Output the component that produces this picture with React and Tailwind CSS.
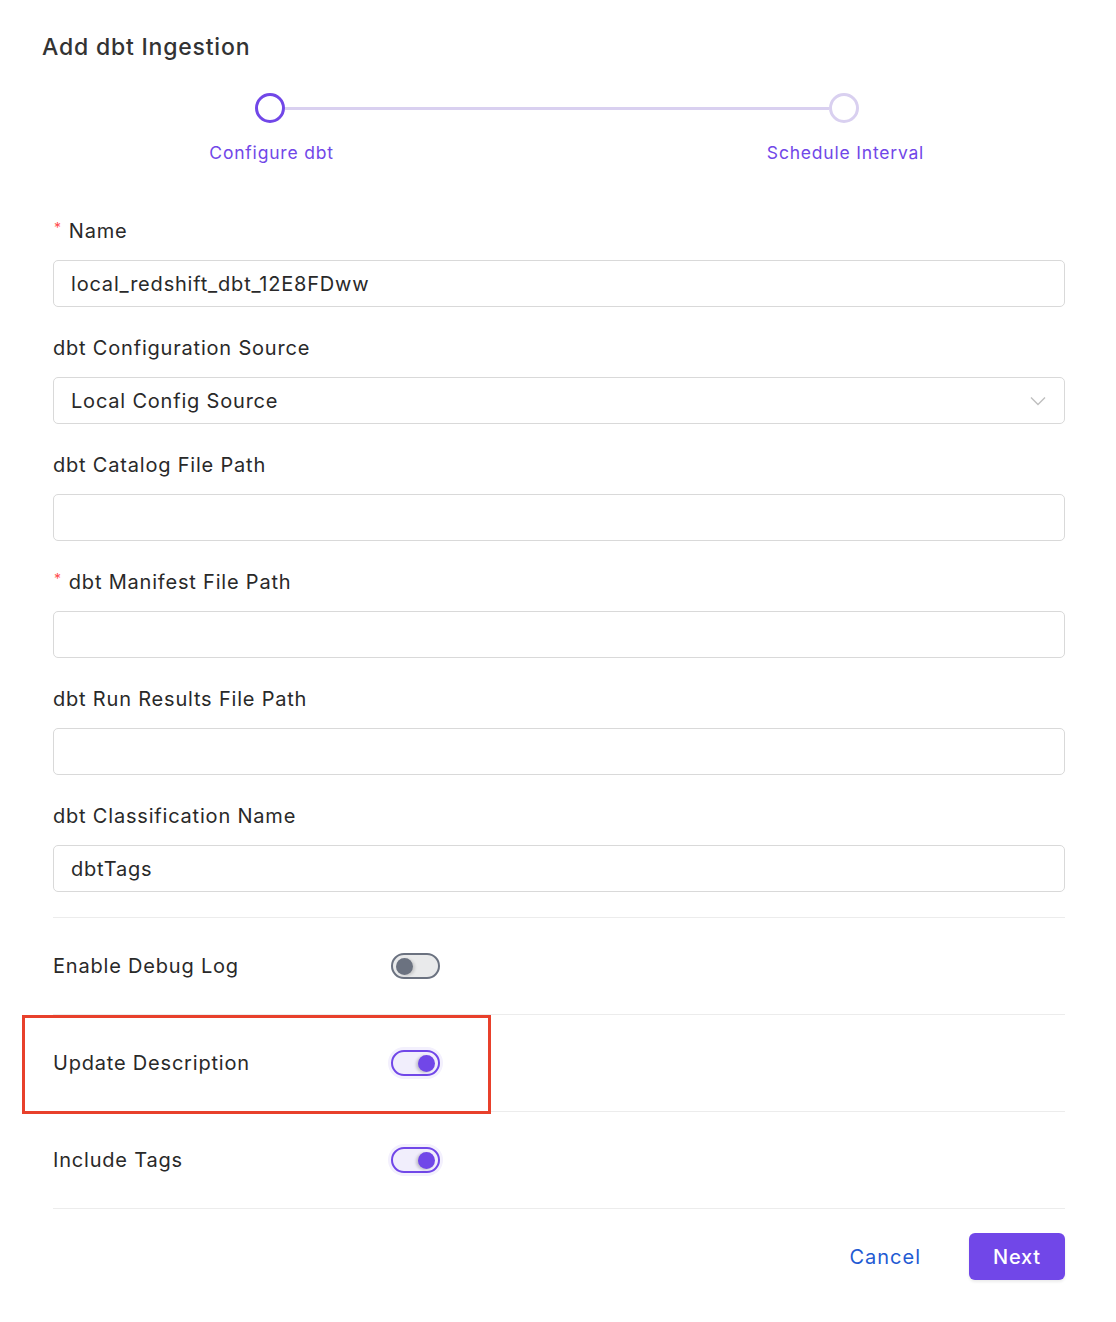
import React, { useState } from 'react';

const fields = [
  { label: 'Name', required: true, value: 'local_redshift_dbt_12E8FDww' },
  { label: 'dbt Configuration Source', select: true, value: 'Local Config Source' },
  { label: 'dbt Catalog File Path', value: '' },
  { label: 'dbt Manifest File Path', required: true, value: '' },
  { label: 'dbt Run Results File Path', value: '' },
  { label: 'dbt Classification Name', value: 'dbtTags' },
];

const Toggle = ({ on, onClick }) => (
  <button
    onClick={onClick}
    className={`relative w-[49px] h-[26px] rounded-full border-2 flex items-center px-[3px] ${
      on
        ? 'bg-[#f1eefc] border-[#7147e8] justify-end shadow-[0_0_0_3px_#f3f0fd]'
        : 'bg-[#e9eaeb] border-[#6b7280] justify-start'
    }`}
  >
    <span
      className={`block w-[17px] h-[17px] rounded-full ${
        on ? 'bg-[#7147e8] shadow-[-2px_1px_3px_rgba(0,0,0,0.2)]' : 'bg-[#6b7280] shadow-[2px_1px_3px_rgba(0,0,0,0.15)]'
      }`}
    />
  </button>
);

const App = () => {
  const [debug, setDebug] = useState(false);
  const [updateDesc, setUpdateDesc] = useState(true);
  const [tags, setTags] = useState(true);

  const toggles = [
    { label: 'Enable Debug Log', on: debug, set: setDebug },
    { label: 'Update Description', on: updateDesc, set: setUpdateDesc, highlight: true },
    { label: 'Include Tags', on: tags, set: setTags },
  ];

  return (
    <div
      className="bg-white min-h-[1322px] w-[1116px] text-[#292929] tracking-[0.05em]"
      style={{ fontFamily: 'Inter, "Noto Sans", sans-serif' }}
    >
      <div className="pl-[42px] pt-[30px]">
        <h1 className="text-[23px] font-medium text-[#333] leading-[34px]">Add dbt Ingestion</h1>
      </div>

      {/* Stepper */}
      <div className="ml-[255px] w-[604px] mt-[29px]">
        <div className="flex items-center">
          <div className="w-[30px] h-[30px] rounded-full border-[3px] border-[#7147e8] bg-white shrink-0" />
          <div className="flex-1 h-[3px] bg-[#d9d0f0]" />
          <div className="w-[30px] h-[30px] rounded-full border-[3px] border-[#d9d0f0] bg-white shrink-0" />
        </div>
        <div className="flex justify-between mt-[20px]">
          <div className="w-[30px] flex justify-center">
            <span className="whitespace-nowrap text-[17.5px] text-[#7147e8] leading-[20px] ml-[3px]">Configure dbt</span>
          </div>
          <div className="w-[30px] flex justify-center">
            <span className="whitespace-nowrap text-[17.5px] text-[#7147e8] leading-[20px] ml-[3px]">Schedule Interval</span>
          </div>
        </div>
      </div>

      {/* Form */}
      <div className="mr-[51px] ml-[53px] mt-[56px]">
        <div className="flex flex-col gap-[29px]">
          {fields.map((f) => (
            <div key={f.label}>
              <label className="flex items-center h-[24px] text-[20px] leading-[24px]">
                {f.required && <span className="text-[#ff4d4f] text-[14px] mr-[7px] ml-[1px] -mt-[6px]">*</span>}
                {f.label}
              </label>
              <div className="mt-[17px] h-[47px] rounded-[5px] border border-[#d9d9d9] flex items-center pl-[17px] pr-[18px] text-[20px]">
                <span className="flex-1">{f.value}</span>
                {f.select && (
                  <svg width="16" height="10" viewBox="0 0 16 10" fill="none">
                    <path d="M1 1.5L8 8.5L15 1.5" stroke="#bfbfbf" strokeWidth="1.4" />
                  </svg>
                )}
              </div>
            </div>
          ))}
        </div>

        <div className="mt-[25px] border-t border-[#ececec]">
          {toggles.map((t) => (
            <div key={t.label} className="relative h-[97px] border-b border-[#ececec] flex items-center">
              {t.highlight && (
                <div className="absolute -left-[31px] top-0 w-[469px] h-[99px] border-[3px] border-[#e8402b] pointer-events-none" />
              )}
              <span className="w-[338px] text-[20px]">{t.label}</span>
              <Toggle on={t.on} onClick={() => t.set(!t.on)} />
            </div>
          ))}
        </div>

        <div className="flex justify-end items-center mt-[24px] gap-[48px]">
          <button className="text-[20px] text-[#1f5bd3] tracking-[0.05em]">Cancel</button>
          <button className="w-[96px] h-[47px] rounded-[6px] bg-[#7147e8] text-white text-[20px] font-medium shadow-[0_2px_3px_rgba(0,0,0,0.08)]">
            Next
          </button>
        </div>
      </div>
    </div>
  );
};

export default App;
